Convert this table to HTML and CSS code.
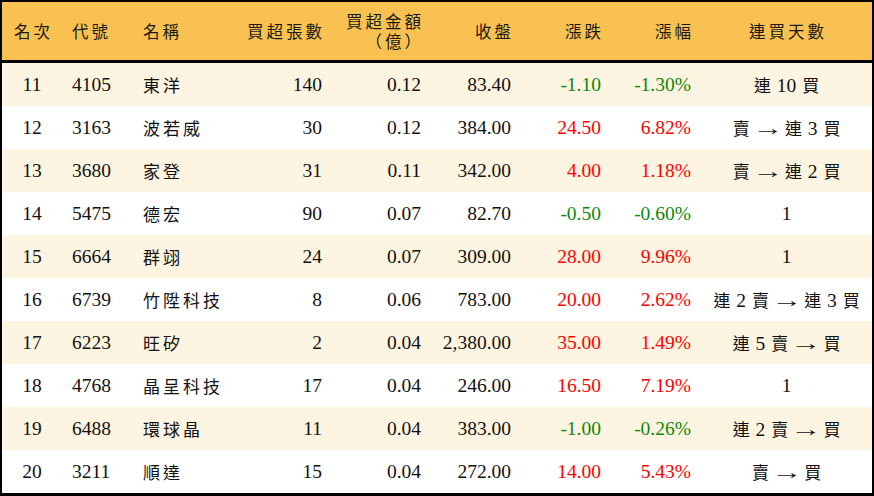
FILE: index.html
```html
<!DOCTYPE html>
<html lang="zh-Hant">
<head>
<meta charset="utf-8">
<link rel="stylesheet" href="styles.css">
</head>
<body>
<div class="board">
  <div class="row head">
    <div class="cell ctr"><span class="h">名次</span></div>
    <div class="cell lft"><span class="h">代號</span></div>
    <div class="cell lft"><span class="h">名稱</span></div>
    <div class="cell rgt"><span class="h">買超張數</span></div>
    <div class="cell rgt two"><span class="h">買超金額</span><span class="h">（億）</span></div>
    <div class="cell rgt"><span class="h">收盤</span></div>
    <div class="cell rgt"><span class="h">漲跌</span></div>
    <div class="cell rgt"><span class="h">漲幅</span></div>
    <div class="cell ctr"><span class="h">連買天數</span></div>
  </div>

  <div class="row odd">
    <div class="cell ctr">11</div><div class="cell lft">4105</div><div class="cell lft name">東洋</div>
    <div class="cell rgt">140</div><div class="cell rgt">0.12</div><div class="cell rgt">83.40</div>
    <div class="cell rgt dn">-1.10</div><div class="cell rgt dn">-1.30%</div>
    <div class="cell ctr days"><span class="c">連</span> 10 <span class="c">買</span></div>
  </div>
  <div class="row">
    <div class="cell ctr">12</div><div class="cell lft">3163</div><div class="cell lft name">波若威</div>
    <div class="cell rgt">30</div><div class="cell rgt">0.12</div><div class="cell rgt">384.00</div>
    <div class="cell rgt up">24.50</div><div class="cell rgt up">6.82%</div>
    <div class="cell ctr days"><span class="c">賣</span> <span class="ar">→</span> <span class="c">連</span> 3 <span class="c">買</span></div>
  </div>
  <div class="row odd">
    <div class="cell ctr">13</div><div class="cell lft">3680</div><div class="cell lft name">家登</div>
    <div class="cell rgt">31</div><div class="cell rgt">0.11</div><div class="cell rgt">342.00</div>
    <div class="cell rgt up">4.00</div><div class="cell rgt up">1.18%</div>
    <div class="cell ctr days"><span class="c">賣</span> <span class="ar">→</span> <span class="c">連</span> 2 <span class="c">買</span></div>
  </div>
  <div class="row">
    <div class="cell ctr">14</div><div class="cell lft">5475</div><div class="cell lft name">德宏</div>
    <div class="cell rgt">90</div><div class="cell rgt">0.07</div><div class="cell rgt">82.70</div>
    <div class="cell rgt dn">-0.50</div><div class="cell rgt dn">-0.60%</div>
    <div class="cell ctr days">1</div>
  </div>
  <div class="row odd">
    <div class="cell ctr">15</div><div class="cell lft">6664</div><div class="cell lft name">群翊</div>
    <div class="cell rgt">24</div><div class="cell rgt">0.07</div><div class="cell rgt">309.00</div>
    <div class="cell rgt up">28.00</div><div class="cell rgt up">9.96%</div>
    <div class="cell ctr days">1</div>
  </div>
  <div class="row">
    <div class="cell ctr">16</div><div class="cell lft">6739</div><div class="cell lft name">竹陞科技</div>
    <div class="cell rgt">8</div><div class="cell rgt">0.06</div><div class="cell rgt">783.00</div>
    <div class="cell rgt up">20.00</div><div class="cell rgt up">2.62%</div>
    <div class="cell ctr days"><span class="c">連</span> 2 <span class="c">賣</span> <span class="ar">→</span> <span class="c">連</span> 3 <span class="c">買</span></div>
  </div>
  <div class="row odd">
    <div class="cell ctr">17</div><div class="cell lft">6223</div><div class="cell lft name">旺矽</div>
    <div class="cell rgt">2</div><div class="cell rgt">0.04</div><div class="cell rgt">2,380.00</div>
    <div class="cell rgt up">35.00</div><div class="cell rgt up">1.49%</div>
    <div class="cell ctr days"><span class="c">連</span> 5 <span class="c">賣</span> <span class="ar">→</span> <span class="c">買</span></div>
  </div>
  <div class="row">
    <div class="cell ctr">18</div><div class="cell lft">4768</div><div class="cell lft name">晶呈科技</div>
    <div class="cell rgt">17</div><div class="cell rgt">0.04</div><div class="cell rgt">246.00</div>
    <div class="cell rgt up">16.50</div><div class="cell rgt up">7.19%</div>
    <div class="cell ctr days">1</div>
  </div>
  <div class="row odd">
    <div class="cell ctr">19</div><div class="cell lft">6488</div><div class="cell lft name">環球晶</div>
    <div class="cell rgt">11</div><div class="cell rgt">0.04</div><div class="cell rgt">383.00</div>
    <div class="cell rgt dn">-1.00</div><div class="cell rgt dn">-0.26%</div>
    <div class="cell ctr days"><span class="c">連</span> 2 <span class="c">賣</span> <span class="ar">→</span> <span class="c">買</span></div>
  </div>
  <div class="row">
    <div class="cell ctr">20</div><div class="cell lft">3211</div><div class="cell lft name">順達</div>
    <div class="cell rgt">15</div><div class="cell rgt">0.04</div><div class="cell rgt">272.00</div>
    <div class="cell rgt up">14.00</div><div class="cell rgt up">5.43%</div>
    <div class="cell ctr days"><span class="c">賣</span> <span class="ar">→</span> <span class="c">買</span></div>
  </div>
</div>
</body>
</html>
```
FILE: styles.css
```css
html, body {
  margin: 0;
  padding: 0;
  background: #fff;
}
.board {
  width: 874px;
  height: 496px;
  box-sizing: border-box;
  border: 2px solid #000;
  border-bottom-width: 3px;
  overflow: hidden;
  background: #fff;
  font-family: "Liberation Serif", "Noto Sans CJK TC", serif;
  font-size: 19.5px;
  color: #111;
}
.row {
  display: grid;
  grid-template-columns: 60px 70px 100px 100px 99px 90px 90px 90px 171px;
  height: 43px;
  align-items: center;
}
.row.odd {
  background: #fdf4e1;
}
.row.head {
  height: 58px;
  background: #f8c151;
  border-bottom: 3px solid #000;
}
.cell {
  white-space: nowrap;
}
.ctr { text-align: center; }
.lft { text-align: left; padding-left: 10px; }
.rgt { text-align: right; padding-right: 10px; }
.row .cell:nth-child(3).lft { padding-left: 11px; }
.h {
  font-family: "Noto Sans CJK TC", sans-serif;
  font-size: 16.5px;
  letter-spacing: 3px;
  color: #1a1a1a;
}
.rgt .h { margin-right: -3px; }
.ctr .h { padding-left: 3px; }
.two {
  display: flex;
  flex-direction: column;
  align-items: flex-end;
  line-height: 20px;
}
.name {
  font-family: "Noto Sans CJK TC", sans-serif;
  font-size: 17px;
  letter-spacing: 3px;
}
.days {
  word-spacing: 1px;
}
.c {
  font-family: "Noto Sans CJK TC", sans-serif;
  font-size: 17px;
}
.ar {
  display: inline-block;
  transform: scaleX(1.6);
  margin: 0 2px;
}
.up { color: #ff0000; }
.dn { color: #0c880c; }
```
